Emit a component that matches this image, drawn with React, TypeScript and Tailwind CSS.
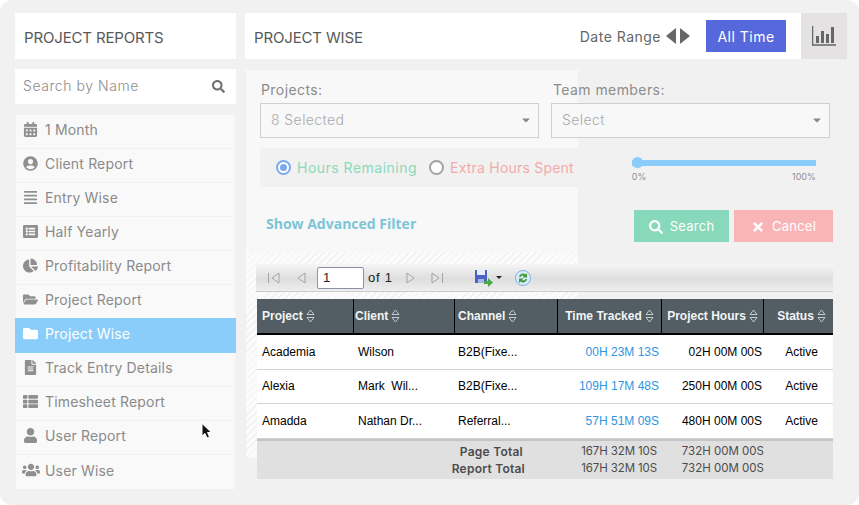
import {
  FaCalendarAlt,
  FaUserCircle,
  FaAlignJustify,
  FaListAlt,
  FaChartPie,
  FaFolderOpen,
  FaFolder,
  FaFileAlt,
  FaThList,
  FaUser,
  FaUsers,
  FaSearch,
  FaTimes,
  FaCaretDown,
} from 'react-icons/fa';
import type { ReactNode } from 'react';

const reports = [
  { label: '1 Month', icon: <FaCalendarAlt /> },
  { label: 'Client Report', icon: <FaUserCircle /> },
  { label: 'Entry Wise', icon: <FaAlignJustify /> },
  { label: 'Half Yearly', icon: <FaListAlt /> },
  { label: 'Profitability Report', icon: <FaChartPie /> },
  { label: 'Project Report', icon: <FaFolderOpen /> },
  { label: 'Project Wise', icon: <FaFolder />, active: true },
  { label: 'Track Entry Details', icon: <FaFileAlt /> },
  { label: 'Timesheet Report', icon: <FaThList /> },
  { label: 'User Report', icon: <FaUser /> },
  { label: 'User Wise', icon: <FaUsers className="h-[18px] w-[18px] shrink-0" /> },
];

const rows = [
  { project: 'Academia', client: 'Wilson', channel: 'B2B(Fixe...', tracked: '00H 23M 13S', hours: '02H 00M 00S', status: 'Active' },
  { project: 'Alexia', client: 'Mark  Wil...', channel: 'B2B(Fixe...', tracked: '109H 17M 48S', hours: '250H 00M 00S', status: 'Active' },
  { project: 'Amadda', client: 'Nathan Dr...', channel: 'Referral...', tracked: '57H 51M 09S', hours: '480H 00M 00S', status: 'Active' },
];

function SortIcon() {
  return (
    <svg width="9" height="14" viewBox="0 0 9 14" className="ml-[3px] shrink-0">
      <path d="M4.5 1 L8 5.5 H1 Z" fill="none" stroke="#c3cacd" strokeWidth="1" />
      <path d="M4.5 13 L8 8.5 H1 Z" fill="none" stroke="#c3cacd" strokeWidth="1" />
    </svg>
  );
}

function HeadCell({ children, className, width }: { children: ReactNode; className: string; width: string }) {
  return (
    <div className={`${width} ${className} flex h-full items-center border-r border-black last:border-r-0`}>
      <span className="whitespace-nowrap">{children}</span>
      <SortIcon />
    </div>
  );
}

function Dropdown({ label, value, indent }: { label: string; value: string; indent: string }) {
  return (
    <div>
      <div className={`${indent} mt-[8px] h-[25px] text-[14px] leading-[23px] tracking-[0.03em] text-[#8c8c8c]`}>{label}</div>
      <div className="flex h-[35px] items-center justify-between border border-[#cfcfcf] bg-[#f8f8f8] pb-[2px] pl-[10px] pr-[6px] text-[14px] font-light tracking-[0.03em] text-[#aaaaaa]">
        {value}
        <FaCaretDown className="text-[12px] text-[#8a8a8a]" />
      </div>
    </div>
  );
}

function PagerArrow({ d }: { d: string }) {
  return (
    <svg width="14" height="14" viewBox="0 0 14 14">
      <path d={d} fill="#e3e3e3" stroke="#a3a3a3" strokeWidth="1" />
    </svg>
  );
}

export default function App() {
  return (
    <div className="h-[505px] w-[859px] overflow-hidden bg-white font-['Inter',sans-serif]">
      <div className="relative flex h-full rounded-[12px] bg-[#f1f1f1] pl-[15px] pt-[13px]">
        {/* left column */}
        <div className="w-[221px] shrink-0">
          <div className="flex h-[46px] items-center bg-white pl-[9px] pt-[5px] text-[15px] tracking-[-0.01em] text-[#595959]">PROJECT REPORTS</div>
          <div className="mt-[10px] flex h-[35px] items-center justify-between bg-white pb-[3px] pl-[8px] pr-[11px] text-[14px] font-light tracking-[0.04em] text-[#8d8d8d]">
            Search by Name
            <FaSearch className="mt-[3px] text-[13px] text-[#6f6f6f]" />
          </div>
          <div className="mt-[11px]">
            {reports.map((r) => (
              <div
                key={r.label}
                className={`flex items-center pb-[4px] text-[14px] tracking-[0.012em] ${
                  r.active
                    ? '-mt-px h-[35px] bg-[#8accfa] pl-[8px] text-white'
                    : 'mx-[1px] h-[34px] border-b border-[#f2f2f2] bg-[#f9f9f9] pl-[7px] text-[#8b8b8b] last:border-b-0'
                }`}
              >
                <span className={`flex w-[15px] justify-center text-[15px] ${r.active ? 'text-white' : 'text-[#8f8f8f]'}`}>{r.icon}</span>
                <span className="ml-[7px] whitespace-nowrap">{r.label}</span>
              </div>
            ))}
          </div>
        </div>

        {/* main column */}
        <div className="ml-[9px] flex w-[602px] shrink-0 flex-col">
          <div className="flex h-[46px] items-center bg-white pl-[9px]">
            <div className="flex-1 pt-[5px] text-[15px] tracking-[-0.01em] text-[#595959]">PROJECT WISE</div>
            <span className="text-[14px] tracking-[0.035em] text-[#666666]">Date Range</span>
            <svg width="24" height="16" viewBox="0 0 24 16" className="ml-[5px]">
              <path d="M10 0 V16 L0 8 Z" fill="#666666" />
              <path d="M14 0 V16 L24 8 Z" fill="#666666" />
            </svg>
            <button className="ml-[16px] h-[32px] w-[80px] bg-[#5768dc] text-[14px] tracking-[0.035em] text-white">All Time</button>
            <div className="ml-[15px] flex h-[46px] w-[46px] items-center justify-center bg-[#e4e2e2]">
              <svg width="24" height="20" viewBox="0 0 24 20">
                <path d="M0.5 0 V19 H24" fill="none" stroke="#666666" strokeWidth="1.5" />
                <path d="M4 10h3v7H4zM9 5h3v12H9zM14 8h3v9h-3zM19 1h3v16h-3z" fill="#666666" />
              </svg>
            </div>
          </div>

          <div className="relative flex-1 pl-[11px]">
            {/* panel backdrop behind the form and the table */}
            <div className="absolute left-[1px] top-[11px] w-[332px]">
              <div className="h-[182px] bg-[#f8f8f8]" />
              <div className="h-[206px] bg-[repeating-linear-gradient(135deg,#f0f0f0_0,#f0f0f0_1px,#fbfbfb_1px,#fbfbfb_5px)]" />
            </div>

            <div className="relative w-[577px]">
              <div className="pl-[4px] pr-[3px] pt-[11px]">
                <div className="grid grid-cols-[279px_279px] gap-x-[12px]">
                  <Dropdown label="Projects:" value="8 Selected" indent="pl-[1px]" />
                  <Dropdown label="Team members:" value="Select" indent="pl-[2px]" />
                </div>
                <div className="mt-[10px] flex h-[39px] items-center bg-[#f1f1f1] pl-[16px] text-[14px]">
                  <span className="flex h-[15px] w-[15px] items-center justify-center rounded-full border-2 border-[#7aa9ee] bg-white">
                    <span className="h-[7px] w-[7px] rounded-full bg-[#7aa9ee]" />
                  </span>
                  <span className="ml-[6px] tracking-[0.035em] text-[#8ad9bb]">Hours Remaining</span>
                  <span className="ml-[12px] h-[15px] w-[15px] rounded-full border-2 border-[#a3a3a3] bg-white" />
                  <span className="ml-[6px] tracking-[0.015em] text-[#f1aaaa]">Extra Hours Spent</span>
                  <div className="ml-[58px] w-[184px] pt-[6px]">
                    <div className="relative h-[6px] bg-[#8accfa]">
                      <span className="absolute left-0 top-[-3px] h-[11px] w-[11px] rounded-full bg-[#8accfa]" />
                    </div>
                    <div className="mt-[6px] flex justify-between text-[9px] leading-[10px] text-[#909090]">
                      <span>0%</span>
                      <span>100%</span>
                    </div>
                  </div>
                </div>
              </div>

              <div className="mt-[23px] flex h-[32px] items-center pl-[10px]">
                <div className="flex-1 pb-[6px] font-['Open_Sans',sans-serif] text-[14px] font-bold text-[#7cc5d6]">Show Advanced Filter</div>
                <button className="flex h-[32px] w-[95px] items-center justify-center bg-[#88d9bc] pt-[1px] text-[13px] tracking-[0.02em] text-white">
                  <FaSearch className="mr-[7px] text-[14px]" />
                  Search
                </button>
                <button className="ml-[5px] flex h-[32px] w-[99px] items-center justify-center bg-[#f9b5b5] pt-[1px] text-[13px] tracking-[0.02em] text-white">
                  <FaTimes className="mr-[7px] text-[14px]" />
                  Cancel
                </button>
              </div>

              <div className="mt-[22px] flex h-[28px] items-center border-b border-[#cccccc] bg-[linear-gradient(#f5f5f5,#dedede_55%,#eeeeee)] font-['Liberation_Sans',sans-serif] text-[13px] text-[#222222]">
                <span className="ml-[11px]"><PagerArrow d="M1.5 2v10M12 2v10L5 7z" /></span>
                <span className="ml-[14px]"><PagerArrow d="M10 2v10L3 7z" /></span>
                <div className="ml-[8px] flex h-[22px] w-[47px] items-center rounded-[2px] border border-[#8a93a8] bg-white pl-[5px] text-[13px]">1</div>
                <span className="ml-[4px] text-[13px] tracking-[0.06em]">of 1</span>
                <span className="ml-[11px]"><PagerArrow d="M3 2v10l7-5z" /></span>
                <span className="ml-[12px]"><PagerArrow d="M2 2v10l7-5zM12.5 2v10" /></span>
                <svg width="19" height="18" viewBox="0 0 19 18" className="ml-[30px]">
                  <path d="M1 1h12v13H1z" fill="#4a63c4" />
                  <path d="M3 1h8v5H3z" fill="#e8ecf8" />
                  <path d="M4 10h6v4H4z" fill="#a9b6e4" />
                  <path d="M10 12h4V9l5 4.5-5 4.5v-3h-4z" fill="#4aa84a" />
                </svg>
                <span className="ml-[3px] h-0 w-0 border-x-[3px] border-t-[3px] border-x-transparent border-t-[#222222]" />
                <svg width="18" height="18" viewBox="0 0 18 18" className="ml-[12px]">
                  <circle cx="9" cy="9" r="7.5" fill="#dcebf8" stroke="#7fb2e0" strokeWidth="1" />
                  <path d="M5 8a4 4 0 0 1 6.5-2.5L13 4v4.5H8.5l1.5-1.5A2.5 2.5 0 0 0 6.5 8z" fill="#3f9a3f" />
                  <path d="M13 10a4 4 0 0 1-6.500 2.500L5 14V9.500h4.500L8 11a2.500 2.500 0 0 0 3.500-1z" fill="#3f9a3f" />
                </svg>
              </div>

              {/* report table */}
              <div className="ml-[1px] mt-[7px] font-['Liberation_Sans',sans-serif] text-[12px]">
                <div className="flex h-[36px] items-center border-b-2 border-black bg-[#525e63] font-bold text-[#f2f4f5]">
                  <HeadCell width="w-[97px]" className="pl-[5px]">Project</HeadCell>
                  <HeadCell width="w-[101px]" className="pl-[1px]">Client</HeadCell>
                  <HeadCell width="w-[103px]" className="pl-[3px]">Channel</HeadCell>
                  <HeadCell width="w-[104px]" className="justify-center">Time Tracked</HeadCell>
                  <HeadCell width="w-[102px]" className="justify-center">Project Hours</HeadCell>
                  <HeadCell width="w-[69px]" className="justify-center pl-[6px]">Status</HeadCell>
                </div>
                {rows.map((r) => (
                  <div key={r.project} className="flex h-[34.500px] items-center border-b border-[#d2d2d2] bg-white text-black last:border-b-0">
                    <div className="w-[97px] pl-[5px]">{r.project}</div>
                    <div className="w-[101px] whitespace-pre pl-[4px]">{r.client}</div>
                    <div className="w-[103px] pl-[3px]">{r.channel}</div>
                    <div className="w-[104px] pr-[3px] text-right text-[#2f95e0]">{r.tracked}</div>
                    <div className="w-[102px] pr-[2px] text-right">{r.hours}</div>
                    <div className="w-[69px] pl-[6px] text-center">{r.status}</div>
                  </div>
                ))}
                <div className="flex h-[40px] border-t-2 border-[#c4c4c4] bg-[#e0e0e0] pt-[2px] font-['Inter',sans-serif] text-[12px] leading-[17px] text-[#4c4c4c]">
                  <div className="w-[192px]" />
                  <div className="w-[76px] whitespace-nowrap text-right font-semibold tracking-[0.02em]">
                    <div className="pr-[2px]">Page Total</div>
                    <div>Report Total</div>
                  </div>
                  <div className="w-[132px] text-right text-[11.5px] tracking-[-0.01em]">
                    <div>167H 32M 10S</div>
                    <div>167H 32M 10S</div>
                  </div>
                  <div className="w-[107px] text-right text-[11.5px]">
                    <div>732H 00M 00S</div>
                    <div>732H 00M 00S</div>
                  </div>
                </div>
              </div>
            </div>
          </div>
        </div>

        {/* mouse pointer in the capture */}
        <svg width="12" height="17" viewBox="0 0 12 17" className="absolute left-[201px] top-[423px]">
          <path d="M1 0.500 V13 L4 10.500 L6 15 L8.500 14 L6.500 9.500 H10.500 Z" fill="#111111" stroke="#ffffff" strokeWidth="1" />
        </svg>
      </div>
    </div>
  );
}
